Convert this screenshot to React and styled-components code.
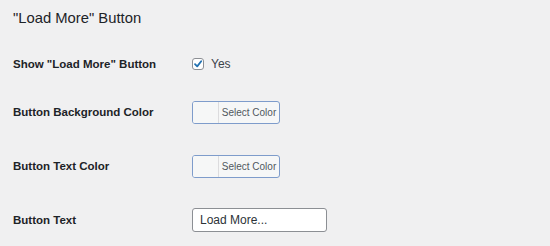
import React from 'react';
import styled, { createGlobalStyle } from 'styled-components';

const GlobalStyle = createGlobalStyle`
  html, body {
    margin: 0;
    padding: 0;
    background: #f0f0f1;
  }
  body {
    font-family: "Liberation Sans", Arial, sans-serif;
    color: #1d2327;
  }
`;

const Page = styled.div`
  padding: 9px 13px 0;
  width: 550px;
  height: 246px;
  box-sizing: border-box;
`;

const Title = styled.h2`
  margin: 0 0 17px;
  font-size: 14.8px;
  font-weight: 400;
  line-height: 18px;
`;

const Row = styled.div`
  display: grid;
  grid-template-columns: 179px 1fr;
  align-items: center;
  height: ${p => p.$h}px;
`;

const Label = styled.div`
  font-size: 11.5px;
  font-weight: 700;
`;

const CheckWrap = styled.label`
  display: flex;
  align-items: center;
  gap: 7px;
  font-size: 12px;
  color: #3c434a;
`;

const Box = styled.span`
  width: 12px;
  height: 12px;
  box-sizing: border-box;
  border: 1px solid #8c8f94;
  border-radius: 3px;
  background: #fff;
  display: flex;
  align-items: center;
  justify-content: center;
`;

const ColorButton = styled.button`
  display: flex;
  align-items: stretch;
  width: 88px;
  height: 23px;
  padding: 0;
  box-sizing: border-box;
  border: 1px solid #7e9ccb;
  border-radius: 3px;
  background: #f6f7f7;
  overflow: hidden;
  cursor: pointer;
`;

const Swatch = styled.span`
  width: 25px;
  border-right: 1px solid #dcdcde;
  background: #f6f7f7;
`;

const ColorText = styled.span`
  flex: 1;
  display: flex;
  align-items: center;
  justify-content: center;
  font-family: "Liberation Sans", Arial, sans-serif;
  font-size: 10px;
  color: #50575e;
`;

const TextInput = styled.input`
  width: 135px;
  height: 24px;
  box-sizing: border-box;
  border: 1px solid #8c8f94;
  border-radius: 3px;
  padding: 0 7px;
  font-family: "Liberation Sans", Arial, sans-serif;
  font-size: 12px;
  color: #2c3338;
  background: #fff;
  outline: none;
`;

function ColorPicker() {
  return (
    <div>
      <ColorButton>
        <Swatch />
        <ColorText>Select Color</ColorText>
      </ColorButton>
    </div>
  );
}

export default function App() {
  return (
    <>
      <GlobalStyle />
      <Page>
        <Title>"Load More" Button</Title>
        <Row $h={40}>
          <Label>Show "Load More" Button</Label>
          <CheckWrap>
            <Box>
              <svg width="10" height="10" viewBox="0 0 10 10">
                <path d="M2 5.2 L4.2 7.4 L8.2 2.2" fill="none" stroke="#2271b1" strokeWidth="1.8" strokeLinecap="round" strokeLinejoin="round" />
              </svg>
            </Box>
            Yes
          </CheckWrap>
        </Row>
        <Row $h={56}>
          <Label>Button Background Color</Label>
          <ColorPicker />
        </Row>
        <Row $h={52}>
          <Label>Button Text Color</Label>
          <ColorPicker />
        </Row>
        <Row $h={55}>
          <Label>Button Text</Label>
          <div>
            <TextInput defaultValue="Load More..." />
          </div>
        </Row>
      </Page>
    </>
  );
}
